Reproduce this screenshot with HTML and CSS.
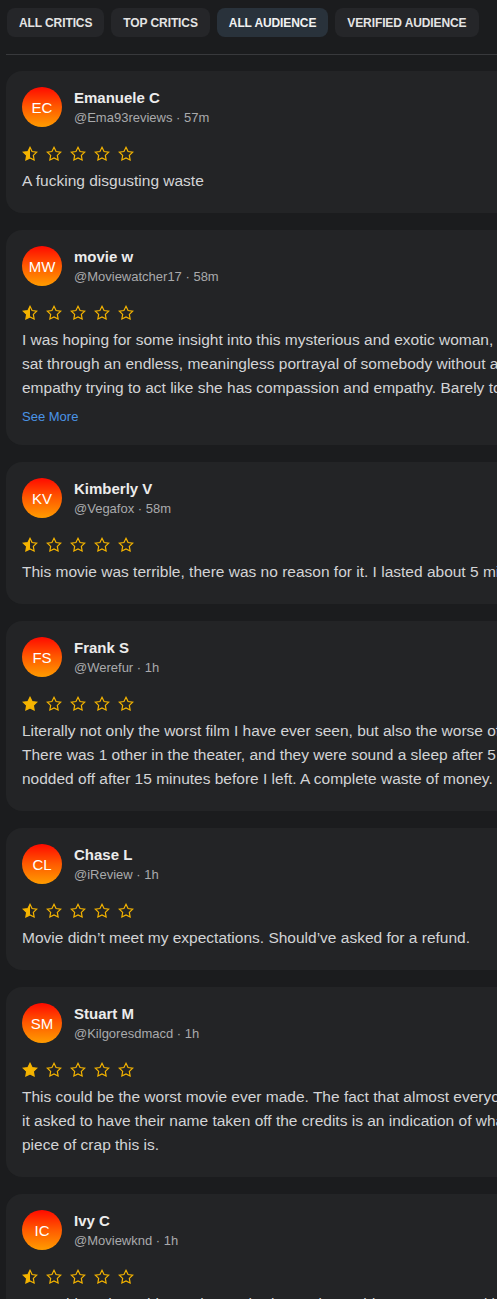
FILE: index.html
```html
<!DOCTYPE html>
<html lang="en">
<head>
<meta charset="utf-8">
<title>Audience Reviews</title>
<link rel="stylesheet" href="styles.css">
</head>
<body>
<div class="page">
  <nav class="tabs">
    <button class="tab">ALL CRITICS</button>
    <button class="tab">TOP CRITICS</button>
    <button class="tab tab-active">ALL AUDIENCE</button>
    <button class="tab">VERIFIED AUDIENCE</button>
  </nav>
  <hr class="divider">

  <section class="reviews">
    <article class="card">
      <header class="card-head">
        <div class="avatar">EC</div>
        <div class="meta">
          <div class="name">Emanuele C</div>
          <div class="handle">@Ema93reviews · 57m</div>
        </div>
      </header>
      <div class="stars half"><svg viewBox="0 0 24 24"><path class="fill" d="M12 2 8.91 8.26 2 9.27l5 4.87-1.18 6.88L12 17.77z"/><path class="outline" d="M12 2l3.09 6.26L22 9.27l-5 4.87 1.18 6.88L12 17.77l-6.18 3.25L7 14.14 2 9.27l6.91-1.01z"/></svg><svg viewBox="0 0 24 24"><path class="outline" d="M12 2l3.09 6.26L22 9.27l-5 4.87 1.18 6.88L12 17.77l-6.18 3.25L7 14.14 2 9.27l6.91-1.01z"/></svg><svg viewBox="0 0 24 24"><path class="outline" d="M12 2l3.09 6.26L22 9.27l-5 4.87 1.18 6.88L12 17.77l-6.18 3.25L7 14.14 2 9.27l6.91-1.01z"/></svg><svg viewBox="0 0 24 24"><path class="outline" d="M12 2l3.09 6.26L22 9.27l-5 4.87 1.18 6.88L12 17.77l-6.18 3.25L7 14.14 2 9.27l6.91-1.01z"/></svg><svg viewBox="0 0 24 24"><path class="outline" d="M12 2l3.09 6.26L22 9.27l-5 4.87 1.18 6.88L12 17.77l-6.18 3.25L7 14.14 2 9.27l6.91-1.01z"/></svg></div>
      <p class="text">A fucking disgusting waste</p>
    </article>

    <article class="card">
      <header class="card-head">
        <div class="avatar">MW</div>
        <div class="meta">
          <div class="name">movie w</div>
          <div class="handle">@Moviewatcher17 · 58m</div>
        </div>
      </header>
      <div class="stars"><svg viewBox="0 0 24 24"><path class="fill" d="M12 2 8.91 8.26 2 9.27l5 4.87-1.18 6.88L12 17.77z"/><path class="outline" d="M12 2l3.09 6.26L22 9.27l-5 4.87 1.18 6.88L12 17.77l-6.18 3.25L7 14.14 2 9.27l6.91-1.01z"/></svg><svg viewBox="0 0 24 24"><path class="outline" d="M12 2l3.09 6.26L22 9.27l-5 4.87 1.18 6.88L12 17.77l-6.18 3.25L7 14.14 2 9.27l6.91-1.01z"/></svg><svg viewBox="0 0 24 24"><path class="outline" d="M12 2l3.09 6.26L22 9.27l-5 4.87 1.18 6.88L12 17.77l-6.18 3.25L7 14.14 2 9.27l6.91-1.01z"/></svg><svg viewBox="0 0 24 24"><path class="outline" d="M12 2l3.09 6.26L22 9.27l-5 4.87 1.18 6.88L12 17.77l-6.18 3.25L7 14.14 2 9.27l6.91-1.01z"/></svg><svg viewBox="0 0 24 24"><path class="outline" d="M12 2l3.09 6.26L22 9.27l-5 4.87 1.18 6.88L12 17.77l-6.18 3.25L7 14.14 2 9.27l6.91-1.01z"/></svg></div>
      <p class="text">I was hoping for some insight into this mysterious and exotic woman, instead I<br>sat through an endless, meaningless portrayal of somebody without any<br>empathy trying to act like she has compassion and empathy. Barely tolerable.</p>
      <a class="see-more" href="#">See More</a>
    </article>

    <article class="card">
      <header class="card-head">
        <div class="avatar">KV</div>
        <div class="meta">
          <div class="name">Kimberly V</div>
          <div class="handle">@Vegafox · 58m</div>
        </div>
      </header>
      <div class="stars"><svg viewBox="0 0 24 24"><path class="fill" d="M12 2 8.91 8.26 2 9.27l5 4.87-1.18 6.88L12 17.77z"/><path class="outline" d="M12 2l3.09 6.26L22 9.27l-5 4.87 1.18 6.88L12 17.77l-6.18 3.25L7 14.14 2 9.27l6.91-1.01z"/></svg><svg viewBox="0 0 24 24"><path class="outline" d="M12 2l3.09 6.26L22 9.27l-5 4.87 1.18 6.88L12 17.77l-6.18 3.25L7 14.14 2 9.27l6.91-1.01z"/></svg><svg viewBox="0 0 24 24"><path class="outline" d="M12 2l3.09 6.26L22 9.27l-5 4.87 1.18 6.88L12 17.77l-6.18 3.25L7 14.14 2 9.27l6.91-1.01z"/></svg><svg viewBox="0 0 24 24"><path class="outline" d="M12 2l3.09 6.26L22 9.27l-5 4.87 1.18 6.88L12 17.77l-6.18 3.25L7 14.14 2 9.27l6.91-1.01z"/></svg><svg viewBox="0 0 24 24"><path class="outline" d="M12 2l3.09 6.26L22 9.27l-5 4.87 1.18 6.88L12 17.77l-6.18 3.25L7 14.14 2 9.27l6.91-1.01z"/></svg></div>
      <p class="text">This movie was terrible, there was no reason for it. I lasted about 5 minutes.</p>
    </article>

    <article class="card">
      <header class="card-head">
        <div class="avatar">FS</div>
        <div class="meta">
          <div class="name">Frank S</div>
          <div class="handle">@Werefur · 1h</div>
        </div>
      </header>
      <div class="stars"><svg viewBox="0 0 24 24"><path class="full" d="M12 2l3.09 6.26L22 9.27l-5 4.87 1.18 6.88L12 17.77l-6.18 3.25L7 14.14 2 9.27l6.91-1.01z"/></svg><svg viewBox="0 0 24 24"><path class="outline" d="M12 2l3.09 6.26L22 9.27l-5 4.87 1.18 6.88L12 17.77l-6.18 3.25L7 14.14 2 9.27l6.91-1.01z"/></svg><svg viewBox="0 0 24 24"><path class="outline" d="M12 2l3.09 6.26L22 9.27l-5 4.87 1.18 6.88L12 17.77l-6.18 3.25L7 14.14 2 9.27l6.91-1.01z"/></svg><svg viewBox="0 0 24 24"><path class="outline" d="M12 2l3.09 6.26L22 9.27l-5 4.87 1.18 6.88L12 17.77l-6.18 3.25L7 14.14 2 9.27l6.91-1.01z"/></svg><svg viewBox="0 0 24 24"><path class="outline" d="M12 2l3.09 6.26L22 9.27l-5 4.87 1.18 6.88L12 17.77l-6.18 3.25L7 14.14 2 9.27l6.91-1.01z"/></svg></div>
      <p class="text">Literally not only the worst film I have ever seen, but also the worse of the year.<br>There was 1 other in the theater, and they were sound a sleep after 5 minutes. I<br>nodded off after 15 minutes before I left. A complete waste of money.</p>
    </article>

    <article class="card">
      <header class="card-head">
        <div class="avatar">CL</div>
        <div class="meta">
          <div class="name">Chase L</div>
          <div class="handle">@iReview · 1h</div>
        </div>
      </header>
      <div class="stars"><svg viewBox="0 0 24 24"><path class="fill" d="M12 2 8.91 8.26 2 9.27l5 4.87-1.18 6.88L12 17.77z"/><path class="outline" d="M12 2l3.09 6.26L22 9.27l-5 4.87 1.18 6.88L12 17.77l-6.18 3.25L7 14.14 2 9.27l6.91-1.01z"/></svg><svg viewBox="0 0 24 24"><path class="outline" d="M12 2l3.09 6.26L22 9.27l-5 4.87 1.18 6.88L12 17.77l-6.18 3.25L7 14.14 2 9.27l6.91-1.01z"/></svg><svg viewBox="0 0 24 24"><path class="outline" d="M12 2l3.09 6.26L22 9.27l-5 4.87 1.18 6.88L12 17.77l-6.18 3.25L7 14.14 2 9.27l6.91-1.01z"/></svg><svg viewBox="0 0 24 24"><path class="outline" d="M12 2l3.09 6.26L22 9.27l-5 4.87 1.18 6.88L12 17.77l-6.18 3.25L7 14.14 2 9.27l6.91-1.01z"/></svg><svg viewBox="0 0 24 24"><path class="outline" d="M12 2l3.09 6.26L22 9.27l-5 4.87 1.18 6.88L12 17.77l-6.18 3.25L7 14.14 2 9.27l6.91-1.01z"/></svg></div>
      <p class="text">Movie didn’t meet my expectations. Should’ve asked for a refund.</p>
    </article>

    <article class="card">
      <header class="card-head">
        <div class="avatar">SM</div>
        <div class="meta">
          <div class="name">Stuart M</div>
          <div class="handle">@Kilgoresdmacd · 1h</div>
        </div>
      </header>
      <div class="stars"><svg viewBox="0 0 24 24"><path class="full" d="M12 2l3.09 6.26L22 9.27l-5 4.87 1.18 6.88L12 17.77l-6.18 3.25L7 14.14 2 9.27l6.91-1.01z"/></svg><svg viewBox="0 0 24 24"><path class="outline" d="M12 2l3.09 6.26L22 9.27l-5 4.87 1.18 6.88L12 17.77l-6.18 3.25L7 14.14 2 9.27l6.91-1.01z"/></svg><svg viewBox="0 0 24 24"><path class="outline" d="M12 2l3.09 6.26L22 9.27l-5 4.87 1.18 6.88L12 17.77l-6.18 3.25L7 14.14 2 9.27l6.91-1.01z"/></svg><svg viewBox="0 0 24 24"><path class="outline" d="M12 2l3.09 6.26L22 9.27l-5 4.87 1.18 6.88L12 17.77l-6.18 3.25L7 14.14 2 9.27l6.91-1.01z"/></svg><svg viewBox="0 0 24 24"><path class="outline" d="M12 2l3.09 6.26L22 9.27l-5 4.87 1.18 6.88L12 17.77l-6.18 3.25L7 14.14 2 9.27l6.91-1.01z"/></svg></div>
      <p class="text">This could be the worst movie ever made. The fact that almost everyone involved in<br>it asked to have their name taken off the credits is an indication of what a<br>piece of crap this is.</p>
    </article>

    <article class="card">
      <header class="card-head">
        <div class="avatar">IC</div>
        <div class="meta">
          <div class="name">Ivy C</div>
          <div class="handle">@Moviewknd · 1h</div>
        </div>
      </header>
      <div class="stars"><svg viewBox="0 0 24 24"><path class="fill" d="M12 2 8.91 8.26 2 9.27l5 4.87-1.18 6.88L12 17.77z"/><path class="outline" d="M12 2l3.09 6.26L22 9.27l-5 4.87 1.18 6.88L12 17.77l-6.18 3.25L7 14.14 2 9.27l6.91-1.01z"/></svg><svg viewBox="0 0 24 24"><path class="outline" d="M12 2l3.09 6.26L22 9.27l-5 4.87 1.18 6.88L12 17.77l-6.18 3.25L7 14.14 2 9.27l6.91-1.01z"/></svg><svg viewBox="0 0 24 24"><path class="outline" d="M12 2l3.09 6.26L22 9.27l-5 4.87 1.18 6.88L12 17.77l-6.18 3.25L7 14.14 2 9.27l6.91-1.01z"/></svg><svg viewBox="0 0 24 24"><path class="outline" d="M12 2l3.09 6.26L22 9.27l-5 4.87 1.18 6.88L12 17.77l-6.18 3.25L7 14.14 2 9.27l6.91-1.01z"/></svg><svg viewBox="0 0 24 24"><path class="outline" d="M12 2l3.09 6.26L22 9.27l-5 4.87 1.18 6.88L12 17.77l-6.18 3.25L7 14.14 2 9.27l6.91-1.01z"/></svg></div>
      <p class="text">Everything about this movie was boring and I would not recommend it to anyone at all.</p>
    </article>
  </section>
</div>
</body>
</html>
```

FILE: styles.css
```css
* {
  box-sizing: border-box;
}

html,
body {
  margin: 0;
  padding: 0;
  background: #1b1c1e;
  overflow: hidden;
}

body {
  font-family: "Liberation Sans", Arial, sans-serif;
  color: #d6d6d6;
}

.page {
  padding: 8px 0 0 6px;
  width: 680px;
}

.tabs {
  display: flex;
  gap: 7px;
  padding-left: 1px;
}

.tab {
  height: 29px;
  padding: 0 12px;
  border: none;
  border-radius: 8px;
  background: #252629;
  color: #e4e4e4;
  font-family: "Liberation Sans", Arial, sans-serif;
  font-weight: 700;
  font-size: 12px;
  letter-spacing: -0.1px;
}

.tab-active {
  background: #29323b;
  color: #f2f2f2;
}

.divider {
  margin: 17px 0 16px;
  border: none;
  border-top: 1px solid #38393c;
  height: 0;
}

.reviews {
  display: flex;
  flex-direction: column;
  gap: 17px;
}

.card {
  width: 640px;
  background: #232426;
  border-radius: 16px;
  padding: 16px 16px 20px;
}

.card-head {
  display: flex;
  align-items: flex-start;
  gap: 12px;
  height: 40px;
}

.avatar {
  width: 40px;
  height: 40px;
  border-radius: 50%;
  background: linear-gradient(180deg, #ff0a00 0%, #ff5a00 50%, #ff9c00 100%);
  color: #ffffff;
  font-size: 15px;
  display: flex;
  align-items: center;
  justify-content: center;
  flex-shrink: 0;
}

.meta {
  padding-top: 1px;
}

.name {
  font-size: 15px;
  font-weight: 700;
  line-height: 20px;
  color: #ececec;
}

.handle {
  font-size: 13px;
  line-height: 19px;
  color: #a9aaac;
}

.stars {
  display: flex;
  gap: 8px;
  margin-top: 19px;
  height: 16px;
}

.stars svg {
  width: 16px;
  height: 16px;
  display: block;
}

.stars .outline {
  fill: none;
  stroke: #f5b400;
  stroke-width: 1.8;
  stroke-linejoin: miter;
}

.stars .fill {
  fill: #f5b400;
}

.stars .full {
  fill: #f5b400;
  stroke: #f5b400;
  stroke-width: 1.8;
}

.text {
  margin: 7px 0 0;
  font-size: 15.5px;
  line-height: 24px;
  color: #d3d4d6;
  white-space: nowrap;
}

.see-more {
  display: block;
  margin-top: 9px;
  font-size: 13px;
  line-height: 16px;
  color: #4a94e6;
  text-decoration: none;
}
```
